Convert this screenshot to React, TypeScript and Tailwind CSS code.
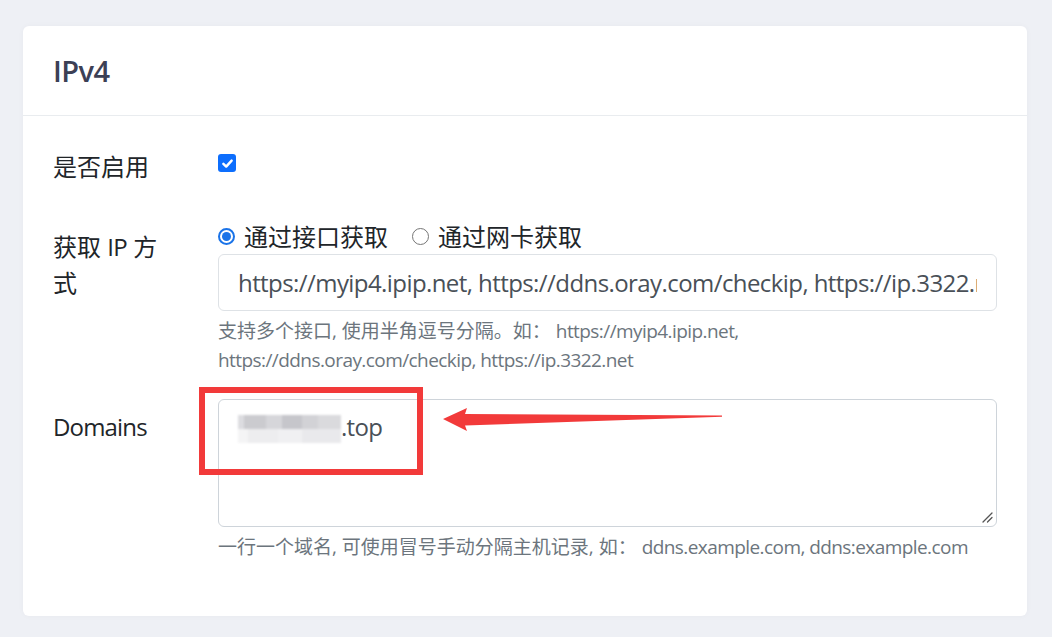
import React from "react";

const FONT = { fontFamily: '"Open Sans", "Noto Sans CJK SC", sans-serif' };

function Checkbox() {
  return (
    <div className="w-[18px] h-[18px] rounded-[3px] bg-[#0d6efd] flex items-center justify-center">
      <svg width="13" height="13" viewBox="0 0 12 12">
        <path d="M2.2 6.3 L4.8 8.8 L9.8 3.4" fill="none" stroke="#fff" strokeWidth="2.3" strokeLinecap="round" strokeLinejoin="round" />
      </svg>
    </div>
  );
}

function Radio({ checked }: { checked?: boolean }) {
  if (checked) {
    return (
      <div className="w-[17px] h-[17px] rounded-full border-[2px] border-[#1a73e8] flex items-center justify-center">
        <div className="w-[9px] h-[9px] rounded-full bg-[#1a73e8]" />
      </div>
    );
  }
  return <div className="w-[17px] h-[17px] rounded-full border-[1.5px] border-[#767676] bg-white" />;
}

export default function App() {
  return (
    <div className="w-[1052px] h-[637px] bg-[#eef0f5] pt-[26px] pl-[23px] pr-[25px] text-[#212529]" style={FONT}>
      <div className="relative bg-white rounded-[6px] shadow-[0_0_6px_rgba(0,0,0,0.03)]">
        <div className="h-[90px] border-b border-[#e9ecef] px-[30px] flex items-center">
          <h5 className="text-[29px] font-semibold text-[#3c4055] leading-none tracking-[-0.02em]">IPv4</h5>
        </div>
        <div className="pt-[23px] px-[30px] pb-[30px]">
          {/* Row 1 */}
          <div className="flex mb-[24px]">
            <label className="w-[120px] mr-[45px] shrink-0 py-[10px] text-[24px] leading-[36px]">是否启用</label>
            <div className="pt-[15px]">
              <Checkbox />
            </div>
          </div>
          {/* Row 2 */}
          <div className="flex mb-[24px]">
            <label className="w-[120px] mr-[45px] shrink-0 pt-[10px] text-[24px] leading-[36px]">
              获取 <span className="tracking-[-0.03em]">IP</span> 方式
            </label>
            <div className="flex-1 min-w-0">
              <div className="h-[35px] flex items-center text-[24px] leading-[36px]">
                <div className="flex items-center">
                  <Radio checked />
                  <span className="ml-[9px]">通过接口获取</span>
                </div>
                <div className="flex items-center ml-[24px]">
                  <Radio />
                  <span className="ml-[9px]">通过网卡获取</span>
                </div>
              </div>
              <div className="h-[57px] border border-[#dee2e6] rounded-[6px] px-[19px] flex items-center">
                <div className="flex-1 min-w-0 overflow-hidden">
                  <span className="block text-[24px] text-[#495057] whitespace-nowrap leading-[36px] tracking-[-0.024em]">
                    https://myip4.ipip.net, https://ddns.oray.com/checkip, https://ip.3322.net
                  </span>
                </div>
              </div>
              <div className="mt-[6px] text-[19px] leading-[29px] text-[#6c757d]">
                支持多个接口, 使用半角逗号分隔。如：&nbsp;
                <span className="tracking-[-0.03em]">https://myip4.ipip.net,</span>
                <br />
                <span className="tracking-[-0.03em]">https://ddns.oray.com/checkip, https://ip.3322.net</span>
              </div>
            </div>
          </div>
          {/* Row 3 */}
          <div className="flex mb-[24px]">
            <label className="w-[120px] mr-[45px] shrink-0 pt-[10px] text-[24px] leading-[36px] tracking-[-0.035em]">Domains</label>
            <div className="flex-1 min-w-0">
              <div className="relative h-[128px] border border-[#ced4da] rounded-[6px] px-[19px] pt-[9px]">
                <div className="flex items-center h-[36px] text-[24px] leading-[36px] text-[#495057] tracking-[-0.03em]">
                  <div className="flex flex-col w-[103px] h-[28px] mt-[4px] blur-[1px]">
                    <div className="flex h-[14px]">
                      <div className="w-[6px] bg-[#dcdce0]" />
                      <div className="w-[22px] bg-[#cbcbcf]" />
                      <div className="w-[16px] bg-[#d6d6da]" />
                      <div className="w-[20px] bg-[#c6c6cb]" />
                      <div className="w-[16px] bg-[#d2d2d6]" />
                      <div className="w-[23px] bg-[#dadadd]" />
                    </div>
                    <div className="flex h-[14px]">
                      <div className="w-[10px] bg-[#f4f4f5]" />
                      <div className="w-[30px] bg-[#ededef]" />
                      <div className="w-[24px] bg-[#f0f0f2]" />
                      <div className="w-[39px] bg-[#e9e9ec]" />
                    </div>
                  </div>
                  <span>.top</span>
                </div>
                <svg className="absolute right-[3px] bottom-[3px]" width="12" height="12" viewBox="0 0 12 12">
                  <path d="M2 11 L11 2 M6.5 11 L11 6.5" stroke="#555" strokeWidth="1.3" strokeLinecap="round" />
                </svg>
              </div>
              <div className="mt-[6px] text-[19px] leading-[29px] text-[#6c757d] whitespace-nowrap">
                一行一个域名, 可使用冒号手动分隔主机记录, 如：&nbsp;
                <span className="tracking-[-0.03em]">ddns.example.com, ddns:example.com</span>
              </div>
            </div>
          </div>
        </div>

        {/* Red highlight box (annotation overlay) */}
        <div className="absolute left-[176px] top-[361px] w-[224px] h-[88px] border-[6px] border-[#f23a3a]" />
        {/* Arrow annotation */}
        <svg className="absolute left-0 top-0 pointer-events-none" width="1004" height="590" viewBox="23 26 1004 590">
          <polygon points="443,419 467,408 465,414 722,415.5 722,416.8 465,425.5 467,431" fill="#f23a3a" />
        </svg>
      </div>
    </div>
  );
}
